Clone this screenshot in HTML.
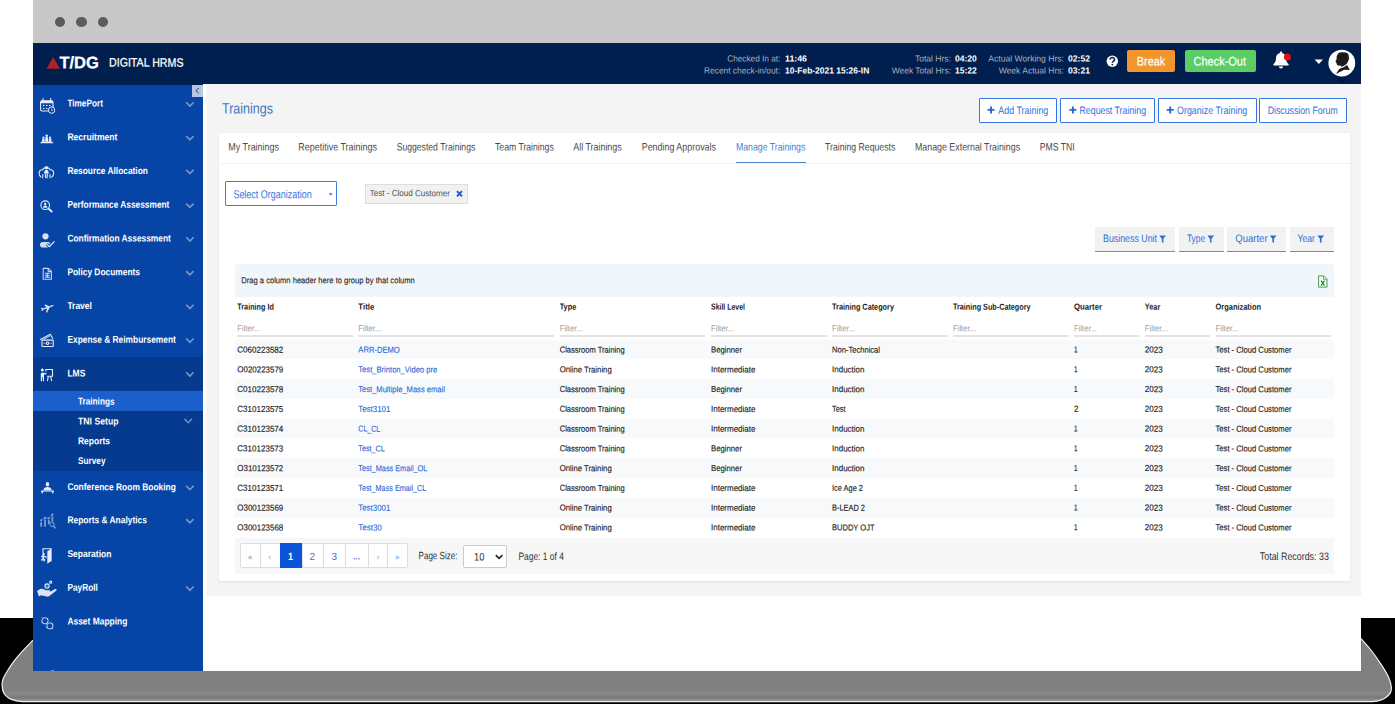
<!DOCTYPE html>
<html>
<head>
<meta charset="utf-8">
<title>Trainings</title>
<style>
html,body{margin:0;padding:0;}
body{width:1395px;height:704px;overflow:hidden;background:#fff;position:relative;font-family:"Liberation Sans",sans-serif;}
.a{position:absolute;}
.t{position:absolute;white-space:pre;transform-origin:0 50%;font-family:"Liberation Sans",sans-serif;}
svg{position:absolute;overflow:visible;}
</style>
</head>
<body>
<!-- device frame bottom -->
<div class="a" style="left:0;top:618px;width:34px;height:86px;background:#000"></div>
<div class="a" style="left:1361px;top:618px;width:34px;height:86px;background:#000"></div>
<svg style="left:0;top:600px" width="1395" height="104" viewBox="0 600 1395 104">
  <defs><linearGradient id="fg" x1="0" y1="671" x2="0" y2="702" gradientUnits="userSpaceOnUse"><stop offset="0" stop-color="#808080"/><stop offset=".613" stop-color="#808080"/><stop offset=".694" stop-color="#888888"/><stop offset=".774" stop-color="#828282"/><stop offset=".855" stop-color="#797979"/><stop offset=".919" stop-color="#8a8a8a"/><stop offset="1" stop-color="#9a9a9a"/></linearGradient></defs>
  <rect x="20" y="701" width="1355" height="3" fill="#000"/>
  <path d="M33 640.2C31.3 642.0 25.8 647.5 22.7 650.9C19.6 654.3 16.6 657.7 14.2 660.8C11.8 663.9 10.0 666.9 8.5 669.3C7.0 671.7 6.0 673.1 5.0 675.0C4.0 676.9 3.1 678.6 2.6 680.5C2.1 682.4 2.0 684.3 2.2 686.4C2.4 688.5 2.8 691.3 3.9 693.2C5.0 695.1 6.7 696.8 8.6 698.0C10.5 699.2 13.2 700.0 15.5 700.6C17.8 701.2 21.2 701.4 22.4 701.6L1371.9 701.6C1373.1 701.5 1376.9 701.3 1379.1 700.7C1381.3 700.1 1383.3 699.3 1385.2 698.0C1387.1 696.7 1389.3 694.8 1390.3 692.9C1391.3 691.0 1391.6 689.5 1391.3 686.8C1391.0 684.1 1390.0 680.4 1388.3 676.6C1386.6 672.9 1384.0 668.7 1381.1 664.3C1378.2 659.9 1374.2 654.3 1370.9 650.0C1367.6 645.7 1362.7 640.6 1361.1 638.7L1361 671L33 671Z" fill="url(#fg)"/>
  <path d="M33 640.2C31.3 642.0 25.8 647.5 22.7 650.9C19.6 654.3 16.6 657.7 14.2 660.8C11.8 663.9 10.0 666.9 8.5 669.3C7.0 671.7 6.0 673.1 5.0 675.0C4.0 676.9 3.1 678.6 2.6 680.5C2.1 682.4 2.0 684.3 2.2 686.4C2.4 688.5 2.8 691.3 3.9 693.2C5.0 695.1 6.7 696.8 8.6 698.0C10.5 699.2 13.2 700.0 15.5 700.6C17.8 701.2 21.2 701.4 22.4 701.6L1371.9 701.6C1373.1 701.5 1376.9 701.3 1379.1 700.7C1381.3 700.1 1383.3 699.3 1385.2 698.0C1387.1 696.7 1389.3 694.8 1390.3 692.9C1391.3 691.0 1391.6 689.5 1391.3 686.8C1391.0 684.1 1390.0 680.4 1388.3 676.6C1386.6 672.9 1384.0 668.7 1381.1 664.3C1378.2 659.9 1374.2 654.3 1370.9 650.0C1367.6 645.7 1362.7 640.6 1361.1 638.7" fill="none" stroke="#f0f0f0" stroke-width="1.200"/>
</svg>
<!-- browser chrome -->
<div class="a" style="left:33px;top:0;width:1328px;height:43px;background:#c8c8c8"></div>
<div class="a" style="left:54.5px;top:16.500px;width:10.800px;height:10.800px;border-radius:50%;background:#5c5c5c"></div>
<div class="a" style="left:76px;top:16.500px;width:10.800px;height:10.800px;border-radius:50%;background:#5c5c5c"></div>
<div class="a" style="left:97.7px;top:16.500px;width:10.800px;height:10.800px;border-radius:50%;background:#5c5c5c"></div>
<!-- app header -->
<div class="a" style="left:33px;top:43px;width:1328px;height:41.200px;background:#001f4e"></div>
<div class="a" style="left:33px;top:83px;width:170px;height:1.8px;background:#001f4e"></div>
<!-- content bg -->
<div class="a" style="left:203px;top:84.200px;width:1158px;height:511.800px;background:#f4f4f4"></div>
<div class="a" style="left:203px;top:84.200px;width:4px;height:587px;background:linear-gradient(90deg,#fff 0,#fff 55%,#f4f4f4 100%)"></div>
<div class="a" style="left:203px;top:596px;width:1158px;height:75px;background:#fff"></div>
<!-- sidebar -->
<div class="a" style="left:33px;top:84.800px;width:170px;height:586.200px;background:#0645a5"></div>
<!-- sidebar states -->
<div class="a" style="left:33px;top:357px;width:170px;height:114px;background:#053a8e"></div>
<div class="a" style="left:33px;top:391px;width:170px;height:20px;background:#1a5fcb"></div>
<div class="a" style="left:192px;top:85px;width:11px;height:12px;background:#b4c7e6"></div>
<!-- header buttons -->
<div class="a" style="left:1127.200px;top:50.300px;width:47.500px;height:22.100px;background:#f2962c;border-radius:2px"></div>
<div class="a" style="left:1184.500px;top:50.300px;width:71.500px;height:22.100px;background:#5bcd64;border-radius:2px"></div>
<!-- action buttons -->
<div class="a" style="left:978.5px;top:98px;width:76.5px;height:23px;border:1px solid #3576e2;background:#fff;border-radius:1px"></div>
<div class="a" style="left:1060px;top:98px;width:92.5px;height:23px;border:1px solid #3576e2;background:#fff;border-radius:1px"></div>
<div class="a" style="left:1157.5px;top:98px;width:97.3px;height:23px;border:1px solid #3576e2;background:#fff;border-radius:1px"></div>
<div class="a" style="left:1258.5px;top:98px;width:86.5px;height:23px;border:1px solid #3576e2;background:#fff;border-radius:1px"></div>
<!-- card -->
<div class="a" style="left:219px;top:133px;width:1131px;height:448px;background:#fff;box-shadow:0 1px 2px rgba(0,0,0,.08)"></div>
<div class="a" style="left:219px;top:162.600px;width:1131px;height:1px;background:#f2f2f2"></div>
<div class="a" style="left:736px;top:161.8px;width:69.8px;height:1.1px;background:#4f88d2"></div>
<!-- org select + chip -->
<div class="a" style="left:225px;top:181.200px;width:110px;height:23px;border:1px solid #3b7ee6;border-radius:1px;background:#fff"></div>
<div class="a" style="left:364.800px;top:183.800px;width:101.600px;height:17.800px;border:0.7px solid #ddd;background:#f1f1f1"></div>
<!-- filter buttons -->
<div class="a" style="left:1095px;top:227px;width:80.3px;height:23.600px;background:#f2f2f3;border-bottom:1.500px solid #5b91e2"></div>
<div class="a" style="left:1179px;top:227px;width:45px;height:23.600px;background:#f2f2f3;border-bottom:1.500px solid #5b91e2"></div>
<div class="a" style="left:1227.4px;top:227px;width:58.8px;height:23.600px;background:#f2f2f3;border-bottom:1.500px solid #5b91e2"></div>
<div class="a" style="left:1289.7px;top:227px;width:44.3px;height:23.600px;background:#f2f2f3;border-bottom:1.500px solid #5b91e2"></div>
<!-- grid -->
<div class="a" style="left:235px;top:264px;width:1099px;height:33.300px;background:#f1f6fa;border-radius:3px 3px 0 0"></div>
<div class="a" style="left:235px;top:339.5px;width:1099px;height:19.8px;background:#f7f9fa"></div>
<div class="a" style="left:235px;top:379.1px;width:1099px;height:19.8px;background:#f7f9fa"></div>
<div class="a" style="left:235px;top:418.7px;width:1099px;height:19.8px;background:#f7f9fa"></div>
<div class="a" style="left:235px;top:458.3px;width:1099px;height:19.8px;background:#f7f9fa"></div>
<div class="a" style="left:235px;top:497.9px;width:1099px;height:19.8px;background:#f7f9fa"></div>
<div class="a" style="left:237.3px;top:335.200px;width:115.5px;height:1.600px;background:#e3e3e3"></div>
<div class="a" style="left:358.3px;top:335.200px;width:195.9px;height:1.600px;background:#e3e3e3"></div>
<div class="a" style="left:559.7px;top:335.200px;width:145.8px;height:1.600px;background:#e3e3e3"></div>
<div class="a" style="left:711.0px;top:335.200px;width:115.5px;height:1.600px;background:#e3e3e3"></div>
<div class="a" style="left:832.0px;top:335.200px;width:115.5px;height:1.600px;background:#e3e3e3"></div>
<div class="a" style="left:953.0px;top:335.200px;width:115.5px;height:1.600px;background:#e3e3e3"></div>
<div class="a" style="left:1074.0px;top:335.200px;width:65.3px;height:1.600px;background:#e3e3e3"></div>
<div class="a" style="left:1144.8px;top:335.200px;width:65.2px;height:1.600px;background:#e3e3e3"></div>
<div class="a" style="left:1215.5px;top:335.200px;width:115.700px;height:1.600px;background:#e3e3e3"></div>

<div class="a" style="left:235px;top:537.5px;width:1099px;height:36px;background:#f7f7f7"></div>
<!-- pager -->
<div class="a" style="left:240px;top:543.4px;width:167.5px;height:25px;background:#fff;border:0.7px solid #ddd;border-radius:2px;box-sizing:border-box"></div>
<div class="a" style="left:260px;top:543.4px;width:0.7px;height:25px;background:#ddd"></div>
<div class="a" style="left:279.5px;top:543.4px;width:0.7px;height:25px;background:#ddd"></div>
<div class="a" style="left:301.7px;top:543.4px;width:0.7px;height:25px;background:#ddd"></div>
<div class="a" style="left:323px;top:543.4px;width:0.7px;height:25px;background:#ddd"></div>
<div class="a" style="left:345px;top:543.4px;width:0.7px;height:25px;background:#ddd"></div>
<div class="a" style="left:368px;top:543.4px;width:0.7px;height:25px;background:#ddd"></div>
<div class="a" style="left:386.5px;top:543.4px;width:0.7px;height:25px;background:#ddd"></div>
<div class="a" style="left:279.5px;top:543.4px;width:22.2px;height:25px;background:#0b55d9"></div>
<div class="a" style="left:463px;top:545.3px;width:44.3px;height:23px;background:#fff;border:0.7px solid #ccc;border-radius:2px;box-sizing:border-box"></div>

<svg style="left:0;top:0" width="1395" height="704" viewBox="0 0 1395 704">
<path d="M46.500 68.700 L53.200 56.900 L59.900 68.700 Z" fill="#ad2328"/>
<path d="M198.7 88 L196 90.7 L198.7 93.4" fill="none" stroke="#2a3350" stroke-width="1"/>
<path d="M186.2 102.2 L189.9 106.0 L193.6 102.2" fill="none" stroke="#7f97c2" stroke-width="1.6"/>
<path d="M186.2 136.0 L189.9 139.8 L193.6 136.0" fill="none" stroke="#7f97c2" stroke-width="1.6"/>
<path d="M186.2 169.8 L189.9 173.6 L193.6 169.8" fill="none" stroke="#7f97c2" stroke-width="1.6"/>
<path d="M186.2 203.6 L189.9 207.4 L193.6 203.6" fill="none" stroke="#7f97c2" stroke-width="1.6"/>
<path d="M186.2 237.3 L189.9 241.1 L193.6 237.3" fill="none" stroke="#7f97c2" stroke-width="1.6"/>
<path d="M186.2 271.1 L189.9 274.9 L193.6 271.1" fill="none" stroke="#7f97c2" stroke-width="1.6"/>
<path d="M186.2 304.8 L189.9 308.6 L193.6 304.8" fill="none" stroke="#7f97c2" stroke-width="1.6"/>
<path d="M186.2 338.5 L189.9 342.3 L193.6 338.5" fill="none" stroke="#7f97c2" stroke-width="1.6"/>
<path d="M186.2 372.3 L189.9 376.1 L193.6 372.3" fill="none" stroke="#7f97c2" stroke-width="1.6"/>
<path d="M186.2 485.9 L189.9 489.7 L193.6 485.9" fill="none" stroke="#7f97c2" stroke-width="1.6"/>
<path d="M186.2 519.1 L189.9 522.9 L193.6 519.1" fill="none" stroke="#7f97c2" stroke-width="1.6"/>
<path d="M186.2 586.5 L189.9 590.3 L193.6 586.5" fill="none" stroke="#7f97c2" stroke-width="1.6"/>
<path d="M184.500 418.9 L188.200 422.7 L191.900 418.9" fill="none" stroke="#6f8bbd" stroke-width="1.6"/>
<g><rect x="40.600" y="100.900" width="12.400" height="10.100" rx="1.400" fill="none" stroke="#e6edf8" stroke-width="1.1"/><path d="M40.600 103.300v-1.200a1.400 1.400 0 0 1 1.400-1.400h9.600a1.400 1.400 0 0 1 1.400 1.400v1.200z" fill="#e6edf8"/><path d="M43 98.600v2.800M50.600 98.600v2.800" fill="none" stroke="#e6edf8" stroke-width="1.1" stroke-width="1.300" stroke-linecap="round"/><g fill="#e6edf8"><circle cx="43.700" cy="105.500" r=".8"/><circle cx="46.700" cy="105.500" r=".8"/><circle cx="49.700" cy="105.500" r=".8"/><circle cx="43.700" cy="108.500" r=".8"/><circle cx="46.700" cy="108.500" r=".8"/></g><circle cx="51.600" cy="110.100" r="3.200" fill="#0645a5" stroke="#e6edf8" stroke-width="1"/><path d="M51.600 108.500v1.800h1.300" fill="none" stroke="#e6edf8" stroke-width=".8"/></g>
<g fill="#e6edf8"><circle cx="46.700" cy="135.700" r="1.300"/><path d="M45.300 141.800v-3.600a1.400 1.200 0 0 1 2.800 0v3.600z"/><circle cx="43.400" cy="137.700" r="1.100"/><path d="M42.100 141.800v-2.200a1.300 1.100 0 0 1 2.600 0v2.200z"/><circle cx="50.100" cy="137.700" r="1.100"/><path d="M48.800 141.800v-2.200a1.300 1.100 0 0 1 2.600 0v2.200z"/><path d="M40 143.200l1.600-1.700h10.400l1.600 1.700z"/></g>
<g><circle cx="46.400" cy="167.700" r="1.600" fill="#e6edf8"/><path d="M43.900 173.600l.5-2.200a2 1.600 0 0 1 4 0l.5 2.200z" fill="#e6edf8"/><path d="M45.400 173.600l.3 4.600M47.400 173.600l-.3 4.600" fill="none" stroke="#e6edf8" stroke-width="1.1" stroke-width="1"/><path d="M42.300 170.400a4.400 4.400 0 0 1 8.200 0" fill="none" stroke="#e6edf8" stroke-width="1.1" stroke-width="1"/><path d="M41.700 169.600C38.300 171 38.200 175 41.400 177.400" fill="none" stroke="#e6edf8" stroke-width="1.1" stroke-width="1.300"/><path d="M51.100 169.600C54.500 171 54.600 175 51.400 177.400" fill="none" stroke="#e6edf8" stroke-width="1.1" stroke-width="1.300"/><path d="M42.600 174.200C43.300 175.600 43.200 177 42.400 178.200M50.200 174.200C49.500 175.600 49.600 177 50.400 178.200" fill="none" stroke="#e6edf8" stroke-width="1.1" stroke-width=".9"/></g>
<g><circle cx="45.200" cy="205.200" r="4.300" fill="none" stroke="#e6edf8" stroke-width="1.1"/><circle cx="45.200" cy="204" r="1.200" fill="#e6edf8"/><path d="M43 207.700a2.200 2.100 0 0 1 4.400 0z" fill="#e6edf8"/><path d="M48.900 208.900l2.700 2.600" fill="none" stroke="#e6edf8" stroke-width="2" stroke-linecap="round"/></g>
<g><circle cx="45.500" cy="236.300" r="3.100" fill="#d3dff3"/><rect x="40" y="241.900" width="10.600" height="5.700" rx="2.800" fill="#d3dff3"/><path d="M46.800 244.200l2.500 2.400 5.200-5.200" fill="none" stroke="#0645a5" stroke-width="3"/><path d="M46.800 244.200l2.500 2.400 5.200-5.200" fill="none" stroke="#e6edf8" stroke-width="1.300"/></g>
<g opacity=".85"><path d="M43.2 268.4h5.2l3 3v7.9h-8.2z" fill="none" stroke="#e6edf8" stroke-width="1.1" stroke-linejoin="round"/><path d="M48.2 268.600v3h3" fill="none" stroke="#e6edf8" stroke-width="1.1" stroke-width=".8"/><path d="M44.900 273.300h4.800M44.900 275.200h4.800M44.900 277.100h4.800M47.300 273.300v3.800" fill="none" stroke="#e6edf8" stroke-width="1.1" stroke-width=".7"/></g>
<g fill="#e6edf8" opacity=".92"><path d="M53.200 304.900C53.900 305.200 53.600 306 52.800 306.300L49.700 307.600L47.200 312.400L46 312.500L46.900 308.600L43.600 309.600L42.400 311L41.500 311.100L41.900 309.300L40.700 308.100L41.600 307.800L43.100 308.300L46.400 307.200L44.200 304.900L45.500 304.600L49.200 306.200L52.200 305Z"/></g>
<g><path d="M40 339.800L50.300 334.300L52.800 338.700" fill="none" stroke="#e6edf8" stroke-width="1.1" stroke-linejoin="round"/><path d="M43.800 339.200L49.900 335.900" fill="none" stroke="#e6edf8" stroke-width="1.1" stroke-width=".7" opacity=".7"/><rect x="42" y="340.100" width="11.200" height="6.400" rx=".6" fill="none" stroke="#e6edf8" stroke-width="1.1" stroke-width="1.400"/><circle cx="47.600" cy="343.300" r="1.800" fill="#e6edf8"/><circle cx="47.600" cy="343.300" r=".7" fill="#0645a5"/><path d="M43.700 343.300h1M50.600 343.300h1" fill="none" stroke="#e6edf8" stroke-width="1.1" stroke-width=".9"/></g>
<g><circle cx="42.300" cy="370" r="1.500" fill="#e6edf8"/><path d="M40.800 381.200v-7.200a1.200 1.200 0 0 1 1.200-1.200h2l2.400 .300v1.100l-2.400 .200v6.800h-1.100v-4h-.8v4z" fill="#e6edf8"/><path d="M45.900 371.400v-1.900h6.600v6.700h-5.400" fill="none" stroke="#e6edf8" stroke-width="1.1" stroke-width="1.300"/><path d="M48.300 376.400l-.9 4.800M50.600 376.400l1.100 4.800" fill="none" stroke="#e6edf8" stroke-width="1.1"/></g>
<g><ellipse cx="47.500" cy="484.200" rx="1.700" ry="2.300" fill="#e6edf8"/><path d="M43.400 490.200C43.400 487.700 45.400 487 47.500 487C49.600 487 51.600 487.700 51.600 490.200Z" fill="#e6edf8"/><path d="M41.200 491h12.600" fill="none" stroke="#e6edf8" stroke-width="1.1" stroke-width="1.300"/><path d="M40.900 491.300h2.600l-1.300 2.700zM51.500 491.300h2.600l-1.300 2.700z" fill="#e6edf8"/></g>
<g fill="none" stroke="#86a6dc"><path d="M41.200 526.800v-4.600M45 526.800v-7.200M48.700 524v-4M52.400 521.600v-5" stroke-width="1.600"/><path d="M41.200 520.300L45 517.800L48.700 518.400L52.400 514.700" stroke-width=".6"/><g fill="#86a6dc" stroke="none"><circle cx="41.200" cy="520.300" r="1.100"/><circle cx="45" cy="517.800" r="1.100"/><circle cx="48.700" cy="518.400" r="1.100"/><circle cx="52.400" cy="514.700" r="1.100"/></g><circle cx="51.900" cy="524.200" r="2.200" stroke-width="1" fill="#0645a5"/><path d="M53.500 526l2.100 2.400" stroke-width="1.300"/></g>
<g><path d="M43 561.200v-12.500h8.100v12.500" fill="none" stroke="#e6edf8" stroke-width="1.1" stroke-width=".9"/><path d="M47.300 551.300L51 548.900L51 561.300L47.300 563.700Z" fill="#e6edf8"/><circle cx="43.900" cy="554" r="1" fill="#e6edf8"/><path d="M41.200 556.700l2.300-1 1.700 1.200 1.500.2M43.700 555.800l-.6 2.600 1.600 1.400-.2 1.500M43.100 558.300l-1.900 2.100" fill="none" stroke="#e6edf8" stroke-width="1.1" stroke-width=".95"/></g>
<g><path d="M37 591l2.800-1.800c1.400-.7 2.800-.6 4 0l2.200 1h3.600c1 0 1 1.500 0 1.600h-3.200 3.800l4.800-2.700c1.200-.6 2.200.7 1.200 1.600l-6.800 5.400c-.9.6-1.800.7-2.800.5l-5.600-1.300-2 1.300z" fill="#e6edf8" opacity=".95"/><circle cx="47.100" cy="586" r="2.100" fill="none" stroke="#e6edf8" stroke-width="1.1" stroke-width="1.200"/><circle cx="47.100" cy="586" r=".6" fill="#e6edf8"/><circle cx="50.700" cy="582.200" r="1.100" fill="none" stroke="#e6edf8" stroke-width="1.1" stroke-width=".9"/></g>
<g fill="none" stroke="#c9d7f0" stroke-width="1"><circle cx="45" cy="620.800" r="3.100"/><circle cx="49.900" cy="625.900" r="3.100"/><path d="M42.800 618.400l-1-1M52.200 628.200l1 1" stroke-width=".9"/></g>
<g fill="#c9d7f0"><circle cx="42.300" cy="622.500" r=".8"/><circle cx="47.600" cy="619" r=".8"/><circle cx="47.200" cy="627.500" r=".8"/><circle cx="52.600" cy="624.200" r=".8"/></g>
<ellipse cx="52.700" cy="670.500" rx="1.300" ry=".600" fill="#9db6e3"/>
<circle cx="1112.3" cy="61.3" r="5.7" fill="#fff"/>
<path d="M1110.1 59.6a2.2 2 0 1 1 3.2 1.7c-.7.4-1 .7-1 1.5" fill="none" stroke="#001f4e" stroke-width="1.5"/><circle cx="1112.3" cy="64.6" r=".9" fill="#001f4e"/>
<path d="M1281 51.4c.6 0 1.100.4 1.100 1v.5c2.400.6 3.900 2.600 3.900 5.100 0 3.400 1.100 4.900 2.400 6 .6.600.2 1.600-.7 1.600h-13.400c-.9 0-1.300-1-.7-1.600 1.300-1.100 2.400-2.600 2.400-6 0-2.500 1.500-4.500 3.900-5.100v-.5c0-.6.5-1 1.100-1zM1278.900 66.500h4.200a2.100 2.100 0 0 1-4.200 0z" fill="#fff"/>
<circle cx="1287.400" cy="56.900" r="3.500" fill="#f20d0d"/>
<path d="M1314.600 59.600h8.400l-4.200 4.300z" fill="#fff"/>
<ellipse cx="1342" cy="79.8" rx="4.2" ry="2.2" fill="#001440"/>
<circle cx="1341.8" cy="63.1" r="13.4" fill="#fff"/>
<path d="M1342.1 52.2L1346 52.6C1347.4 53.2 1348.3 54 1348.6 55.2L1349 58.3C1348.9 59.8 1348.4 60.9 1347.8 61.9L1346.6 64.1L1343.6 65.9L1341.4 66.7L1340.3 65.6L1337.6 65.6C1337.1 65 1336.8 64.4 1336.7 63.7L1336.2 62.4L1335.4 61.3L1336.6 59.5L1336.6 57.3C1336.6 56.2 1336.9 55.300 1337.500 54.400C1338 53.500 1338.700 52.900 1339.600 52.600Z" fill="#1b1b1b"/>
<path d="M1335.900 74L1339.400 68.700L1343.600 67.300L1347.100 65.100L1349.800 70.100L1344.200 69.800Z" fill="#1b1b1b"/>
<path d="M987.5 109.900h7M991.0 106.400v7" fill="none" stroke="#2a66cf" stroke-width="1.900"/>
<path d="M1069.4 109.900h7M1072.9 106.400v7" fill="none" stroke="#2a66cf" stroke-width="1.900"/>
<path d="M1166.7 109.900h7M1170.2 106.400v7" fill="none" stroke="#2a66cf" stroke-width="1.900"/>
<path d="M457 191.100l5 5.300M462 191.100l-5 5.300" fill="none" stroke="#1d55d3" stroke-width="1.900"/>
<path d="M328.800 193.200h3.800l-1.900 2.200z" fill="#2b6fdc"/>
<path d="M495.800 555.100l3.300 3.200 3.300-3.200" fill="none" stroke="#222" stroke-width="1.600"/>
<path d="M1159.2 235.500h6.800l-2.600 3.200v4.400l-1.600-1.200v-3.200z" fill="#2b6fdc"/>
<path d="M1207.3 235.500h6.800l-2.600 3.200v4.400l-1.600-1.200v-3.200z" fill="#2b6fdc"/>
<path d="M1269.7 235.500h6.800l-2.600 3.200v4.400l-1.600-1.200v-3.200z" fill="#2b6fdc"/>
<path d="M1317.3 235.500h6.800l-2.600 3.200v4.400l-1.600-1.200v-3.200z" fill="#2b6fdc"/>
<path d="M1318.600 275.900h5l3.400 3.400v7.800h-8.400z" fill="#fff" stroke="#3da14f" stroke-width="1" stroke-linejoin="round"/><path d="M1323.500 276v3.300h3.300" fill="none" stroke="#3da14f" stroke-width=".8"/>
<path d="M1321 280.600l3.500 5.200M1324.500 280.600l-3.500 5.200" fill="none" stroke="#1f6a30" stroke-width="1.100"/>
</svg>
<span class="t" style="left:59px;top:49px;font-size:16.8px;line-height:28px;color:#fff;font-weight:700;-webkit-text-stroke:0.25px #fff;transform:translate(0.40px,0.20px) scaleX(0.983) rotate(.03deg);">T/DG</span>
<span class="t" style="left:109px;top:52px;font-size:12.2px;line-height:20px;color:#fff;-webkit-text-stroke:0.25px #fff;transform:translate(0.00px,0.60px) scaleX(0.873) rotate(.03deg);">DIGITAL HRMS</span>
<span class="t" style="left:727px;top:51px;font-size:8.8px;line-height:14px;color:#a8b0c0;transform:translate(0.30px,0.41px) scaleX(0.934) rotate(.03deg);">Checked In at:</span>
<span class="t" style="left:785px;top:51px;font-size:8.8px;line-height:14px;color:#fff;font-weight:700;transform:translate(0.00px,0.41px) scaleX(0.999) rotate(.03deg);">11:46</span>
<span class="t" style="left:704px;top:63px;font-size:8.8px;line-height:14px;color:#a8b0c0;transform:translate(0.00px,0.41px) scaleX(0.951) rotate(.03deg);">Recent check-in/out:</span>
<span class="t" style="left:785px;top:63px;font-size:8.8px;line-height:14px;color:#fff;font-weight:700;transform:translate(0.00px,0.41px) scaleX(0.963) rotate(.03deg);">10-Feb-2021 15:26-IN</span>
<span class="t" style="left:915px;top:51px;font-size:8.8px;line-height:14px;color:#a8b0c0;transform:translate(0.00px,0.41px) scaleX(0.969) rotate(.03deg);">Total Hrs:</span>
<span class="t" style="left:955px;top:51px;font-size:8.8px;line-height:14px;color:#fff;font-weight:700;transform:translate(0.00px,0.41px) scaleX(0.964) rotate(.03deg);">04:20</span>
<span class="t" style="left:891px;top:63px;font-size:8.8px;line-height:14px;color:#a8b0c0;transform:translate(0.70px,0.41px) scaleX(0.960) rotate(.03deg);">Week Total Hrs:</span>
<span class="t" style="left:955px;top:63px;font-size:8.8px;line-height:14px;color:#fff;font-weight:700;transform:translate(0.00px,0.41px) scaleX(0.964) rotate(.03deg);">15:22</span>
<span class="t" style="left:988px;top:51px;font-size:8.8px;line-height:14px;color:#a8b0c0;transform:translate(0.30px,0.41px) scaleX(0.976) rotate(.03deg);">Actual Working Hrs:</span>
<span class="t" style="left:1068px;top:51px;font-size:8.8px;line-height:14px;color:#fff;font-weight:700;transform:translate(0.00px,0.41px) scaleX(0.978) rotate(.03deg);">02:52</span>
<span class="t" style="left:998px;top:63px;font-size:8.8px;line-height:14px;color:#a8b0c0;transform:translate(0.70px,0.41px) scaleX(0.970) rotate(.03deg);">Week Actual Hrs:</span>
<span class="t" style="left:1068px;top:63px;font-size:8.8px;line-height:14px;color:#fff;font-weight:700;transform:translate(0.00px,0.41px) scaleX(0.978) rotate(.03deg);">03:21</span>
<span class="t" style="left:1136px;top:51px;font-size:12.4px;line-height:20px;color:#fff;-webkit-text-stroke:0.2px #fff;transform:translate(0.80px,0.40px) scaleX(0.877) rotate(.03deg);">Break</span>
<span class="t" style="left:1193px;top:51px;font-size:12.4px;line-height:20px;color:#fff;-webkit-text-stroke:0.2px #fff;transform:translate(0.50px,0.40px) scaleX(0.887) rotate(.03deg);">Check-Out</span>
<span class="t" style="left:67px;top:95px;font-size:9.8px;line-height:16px;color:#fff;font-weight:700;transform:translate(0.40px,0.41px) scaleX(0.839) rotate(.03deg);">TimePort</span>
<span class="t" style="left:67px;top:129px;font-size:9.8px;line-height:16px;color:#fff;font-weight:700;transform:translate(0.40px,0.21px) scaleX(0.875) rotate(.03deg);">Recruitment</span>
<span class="t" style="left:67px;top:163px;font-size:9.8px;line-height:16px;color:#fff;font-weight:700;transform:translate(0.40px,0.01px) scaleX(0.853) rotate(.03deg);">Resource Allocation</span>
<span class="t" style="left:67px;top:196px;font-size:9.8px;line-height:16px;color:#fff;font-weight:700;transform:translate(0.40px,0.81px) scaleX(0.850) rotate(.03deg);">Performance Assessment</span>
<span class="t" style="left:67px;top:230px;font-size:9.8px;line-height:16px;color:#fff;font-weight:700;transform:translate(0.40px,0.51px) scaleX(0.855) rotate(.03deg);">Confirmation Assessment</span>
<span class="t" style="left:67px;top:264px;font-size:9.8px;line-height:16px;color:#fff;font-weight:700;transform:translate(0.40px,0.31px) scaleX(0.854) rotate(.03deg);">Policy Documents</span>
<span class="t" style="left:67px;top:298px;font-size:9.8px;line-height:16px;color:#fff;font-weight:700;transform:translate(0.40px,0.01px) scaleX(0.865) rotate(.03deg);">Travel</span>
<span class="t" style="left:67px;top:331px;font-size:9.8px;line-height:16px;color:#fff;font-weight:700;transform:translate(0.40px,0.71px) scaleX(0.855) rotate(.03deg);">Expense &amp; Reimbursement</span>
<span class="t" style="left:67px;top:365px;font-size:9.8px;line-height:16px;color:#fff;font-weight:700;transform:translate(0.40px,0.51px) scaleX(0.870) rotate(.03deg);">LMS</span>
<span class="t" style="left:67px;top:479px;font-size:9.8px;line-height:16px;color:#fff;font-weight:700;transform:translate(0.40px,0.11px) scaleX(0.859) rotate(.03deg);">Conference Room Booking</span>
<span class="t" style="left:67px;top:512px;font-size:9.8px;line-height:16px;color:#fff;font-weight:700;transform:translate(0.40px,0.31px) scaleX(0.857) rotate(.03deg);">Reports &amp; Analytics</span>
<span class="t" style="left:67px;top:546px;font-size:9.8px;line-height:16px;color:#fff;font-weight:700;transform:translate(0.40px,0.11px) scaleX(0.869) rotate(.03deg);">Separation</span>
<span class="t" style="left:67px;top:579px;font-size:9.8px;line-height:16px;color:#fff;font-weight:700;transform:translate(0.40px,0.71px) scaleX(0.849) rotate(.03deg);">PayRoll</span>
<span class="t" style="left:67px;top:613px;font-size:9.8px;line-height:16px;color:#fff;font-weight:700;transform:translate(0.40px,0.41px) scaleX(0.861) rotate(.03deg);">Asset Mapping</span>
<span class="t" style="left:78px;top:393px;font-size:9.8px;line-height:16px;color:#fff;font-weight:700;transform:translate(0.00px,0.61px) scaleX(0.838) rotate(.03deg);">Trainings</span>
<span class="t" style="left:78px;top:413px;font-size:9.8px;line-height:16px;color:#fff;font-weight:700;transform:translate(0.00px,0.51px) scaleX(0.886) rotate(.03deg);">TNI Setup</span>
<span class="t" style="left:78px;top:433px;font-size:9.8px;line-height:16px;color:#fff;font-weight:700;transform:translate(0.00px,0.31px) scaleX(0.864) rotate(.03deg);">Reports</span>
<span class="t" style="left:78px;top:453px;font-size:9.8px;line-height:16px;color:#fff;font-weight:700;transform:translate(0.00px,0.11px) scaleX(0.841) rotate(.03deg);">Survey</span>
<span class="t" style="left:222px;top:96px;font-size:15px;line-height:24px;color:#3f74c2;transform:translate(0.00px,0.44px) scaleX(0.834) rotate(.03deg);">Trainings</span>
<span class="t" style="left:998px;top:100px;font-size:10.8px;line-height:18px;color:#2b6fdc;transform:translate(0.30px,0.94px) scaleX(0.825) rotate(.03deg);">Add Training</span>
<span class="t" style="left:1079px;top:100px;font-size:10.8px;line-height:18px;color:#2b6fdc;transform:translate(0.50px,0.94px) scaleX(0.815) rotate(.03deg);">Request Training</span>
<span class="t" style="left:1177px;top:100px;font-size:10.8px;line-height:18px;color:#2b6fdc;transform:translate(0.00px,0.94px) scaleX(0.825) rotate(.03deg);">Organize Training</span>
<span class="t" style="left:1267px;top:100px;font-size:10.8px;line-height:18px;color:#2b6fdc;transform:translate(0.70px,0.94px) scaleX(0.810) rotate(.03deg);">Discussion Forum</span>
<span class="t" style="left:228px;top:137px;font-size:10.8px;line-height:18px;color:#4a4a4a;transform:translate(0.30px,0.54px) scaleX(0.828) rotate(.03deg);">My Trainings</span>
<span class="t" style="left:298px;top:137px;font-size:10.8px;line-height:18px;color:#4a4a4a;transform:translate(0.30px,0.54px) scaleX(0.830) rotate(.03deg);">Repetitive Trainings</span>
<span class="t" style="left:396px;top:137px;font-size:10.8px;line-height:18px;color:#4a4a4a;transform:translate(0.70px,0.54px) scaleX(0.798) rotate(.03deg);">Suggested Trainings</span>
<span class="t" style="left:495px;top:137px;font-size:10.8px;line-height:18px;color:#4a4a4a;transform:translate(0.00px,0.54px) scaleX(0.802) rotate(.03deg);">Team Trainings</span>
<span class="t" style="left:573px;top:137px;font-size:10.8px;line-height:18px;color:#4a4a4a;transform:translate(0.30px,0.54px) scaleX(0.823) rotate(.03deg);">All Trainings</span>
<span class="t" style="left:641px;top:137px;font-size:10.8px;line-height:18px;color:#4a4a4a;transform:translate(0.70px,0.54px) scaleX(0.825) rotate(.03deg);">Pending Approvals</span>
<span class="t" style="left:736px;top:137px;font-size:10.8px;line-height:18px;color:#4480d2;transform:translate(0.00px,0.54px) scaleX(0.807) rotate(.03deg);">Manage Trainings</span>
<span class="t" style="left:825px;top:137px;font-size:10.8px;line-height:18px;color:#4a4a4a;transform:translate(0.00px,0.54px) scaleX(0.806) rotate(.03deg);">Training Requests</span>
<span class="t" style="left:915px;top:137px;font-size:10.8px;line-height:18px;color:#4a4a4a;transform:translate(0.00px,0.54px) scaleX(0.818) rotate(.03deg);">Manage External Trainings</span>
<span class="t" style="left:1039px;top:137px;font-size:10.8px;line-height:18px;color:#4a4a4a;transform:translate(0.70px,0.54px) scaleX(0.803) rotate(.03deg);">PMS TNI</span>
<span class="t" style="left:233px;top:185px;font-size:11.5px;line-height:18px;color:#3474df;transform:translate(0.40px,0.20px) scaleX(0.780) rotate(.03deg);">Select Organization</span>
<span class="t" style="left:369px;top:186px;font-size:8.9px;line-height:14px;color:#555;transform:translate(0.70px,0.10px) scaleX(0.909) rotate(.03deg);">Test - Cloud Customer</span>
<span class="t" style="left:1103px;top:228px;font-size:10.8px;line-height:18px;color:#2b6fdc;transform:translate(0.00px,0.94px) scaleX(0.818) rotate(.03deg);">Business Unit</span>
<span class="t" style="left:1187px;top:228px;font-size:10.8px;line-height:18px;color:#2b6fdc;transform:translate(0.00px,0.94px) scaleX(0.769) rotate(.03deg);">Type</span>
<span class="t" style="left:1235px;top:228px;font-size:10.8px;line-height:18px;color:#2b6fdc;transform:translate(0.30px,0.94px) scaleX(0.882) rotate(.03deg);">Quarter</span>
<span class="t" style="left:1297px;top:228px;font-size:10.8px;line-height:18px;color:#2b6fdc;transform:translate(0.50px,0.94px) scaleX(0.802) rotate(.03deg);">Year</span>
<span class="t" style="left:241px;top:273px;font-size:8.7px;line-height:14px;color:#262626;-webkit-text-stroke:0.12px #262626;transform:translate(0.30px,0.22px) scaleX(0.872) rotate(.03deg);">Drag a column header here to group by that column</span>
<span class="t" style="left:237px;top:299px;font-size:8.7px;line-height:14px;color:#222;font-weight:700;transform:translate(0.30px,0.62px) scaleX(0.831) rotate(.03deg);">Training Id</span>
<span class="t" style="left:358px;top:299px;font-size:8.7px;line-height:14px;color:#222;font-weight:700;transform:translate(0.30px,0.62px) scaleX(0.904) rotate(.03deg);">Title</span>
<span class="t" style="left:559px;top:299px;font-size:8.7px;line-height:14px;color:#222;font-weight:700;transform:translate(0.70px,0.62px) scaleX(0.840) rotate(.03deg);">Type</span>
<span class="t" style="left:711px;top:299px;font-size:8.7px;line-height:14px;color:#222;font-weight:700;transform:translate(0.00px,0.62px) scaleX(0.800) rotate(.03deg);">Skill Level</span>
<span class="t" style="left:832px;top:299px;font-size:8.7px;line-height:14px;color:#222;font-weight:700;transform:translate(0.00px,0.62px) scaleX(0.839) rotate(.03deg);">Training Category</span>
<span class="t" style="left:953px;top:299px;font-size:8.7px;line-height:14px;color:#222;font-weight:700;transform:translate(0.00px,0.62px) scaleX(0.832) rotate(.03deg);">Training Sub-Category</span>
<span class="t" style="left:1074px;top:299px;font-size:8.7px;line-height:14px;color:#222;font-weight:700;transform:translate(0.00px,0.62px) scaleX(0.892) rotate(.03deg);">Quarter</span>
<span class="t" style="left:1144px;top:299px;font-size:8.7px;line-height:14px;color:#222;font-weight:700;transform:translate(0.80px,0.62px) scaleX(0.844) rotate(.03deg);">Year</span>
<span class="t" style="left:1215px;top:299px;font-size:8.7px;line-height:14px;color:#222;font-weight:700;transform:translate(0.50px,0.62px) scaleX(0.857) rotate(.03deg);">Organization</span>
<span class="t" style="left:237px;top:321px;font-size:8.7px;line-height:14px;color:#9c9c9c;transform:translate(0.30px,0.32px) scaleX(0.882) rotate(.03deg);">Filter...</span>
<span class="t" style="left:358px;top:321px;font-size:8.7px;line-height:14px;color:#9c9c9c;transform:translate(0.30px,0.32px) scaleX(0.882) rotate(.03deg);">Filter...</span>
<span class="t" style="left:559px;top:321px;font-size:8.7px;line-height:14px;color:#9c9c9c;transform:translate(0.70px,0.32px) scaleX(0.882) rotate(.03deg);">Filter...</span>
<span class="t" style="left:711px;top:321px;font-size:8.7px;line-height:14px;color:#9c9c9c;transform:translate(0.00px,0.32px) scaleX(0.882) rotate(.03deg);">Filter...</span>
<span class="t" style="left:832px;top:321px;font-size:8.7px;line-height:14px;color:#9c9c9c;transform:translate(0.00px,0.32px) scaleX(0.882) rotate(.03deg);">Filter...</span>
<span class="t" style="left:953px;top:321px;font-size:8.7px;line-height:14px;color:#9c9c9c;transform:translate(0.00px,0.32px) scaleX(0.882) rotate(.03deg);">Filter...</span>
<span class="t" style="left:1074px;top:321px;font-size:8.7px;line-height:14px;color:#9c9c9c;transform:translate(0.00px,0.32px) scaleX(0.882) rotate(.03deg);">Filter...</span>
<span class="t" style="left:1144px;top:321px;font-size:8.7px;line-height:14px;color:#9c9c9c;transform:translate(0.80px,0.32px) scaleX(0.882) rotate(.03deg);">Filter...</span>
<span class="t" style="left:1215px;top:321px;font-size:8.7px;line-height:14px;color:#9c9c9c;transform:translate(0.50px,0.32px) scaleX(0.882) rotate(.03deg);">Filter...</span>
<span class="t" style="left:237px;top:342px;font-size:8.7px;line-height:14px;color:#242424;-webkit-text-stroke:0.15px #242424;transform:translate(0.30px,0.62px) scaleX(0.924) rotate(.03deg);">C060223582</span>
<span class="t" style="left:358px;top:342px;font-size:8.7px;line-height:14px;color:#2567d8;-webkit-text-stroke:0.1px #2567d8;transform:translate(0.30px,0.62px) scaleX(0.877) rotate(.03deg);">ARR-DEMO</span>
<span class="t" style="left:559px;top:342px;font-size:8.7px;line-height:14px;color:#242424;-webkit-text-stroke:0.15px #242424;transform:translate(0.70px,0.62px) scaleX(0.868) rotate(.03deg);">Classroom Training</span>
<span class="t" style="left:711px;top:342px;font-size:8.7px;line-height:14px;color:#242424;-webkit-text-stroke:0.15px #242424;transform:translate(0.00px,0.62px) scaleX(0.891) rotate(.03deg);">Beginner</span>
<span class="t" style="left:832px;top:342px;font-size:8.7px;line-height:14px;color:#242424;-webkit-text-stroke:0.15px #242424;transform:translate(0.00px,0.62px) scaleX(0.872) rotate(.03deg);">Non-Technical</span>
<span class="t" style="left:1074px;top:342px;font-size:8.7px;line-height:14px;color:#242424;-webkit-text-stroke:0.15px #242424;transform:translate(0.00px,0.62px) scaleX(0.723) rotate(.03deg);">1</span>
<span class="t" style="left:1144px;top:342px;font-size:8.7px;line-height:14px;color:#242424;-webkit-text-stroke:0.15px #242424;transform:translate(0.80px,0.62px) scaleX(0.931) rotate(.03deg);">2023</span>
<span class="t" style="left:1215px;top:342px;font-size:8.7px;line-height:14px;color:#242424;-webkit-text-stroke:0.15px #242424;transform:translate(0.50px,0.62px) scaleX(0.879) rotate(.03deg);">Test - Cloud Customer</span>
<span class="t" style="left:237px;top:362px;font-size:8.7px;line-height:14px;color:#242424;-webkit-text-stroke:0.15px #242424;transform:translate(0.30px,0.37px) scaleX(0.915) rotate(.03deg);">O020223579</span>
<span class="t" style="left:358px;top:362px;font-size:8.7px;line-height:14px;color:#2567d8;-webkit-text-stroke:0.1px #2567d8;transform:translate(0.30px,0.37px) scaleX(0.876) rotate(.03deg);">Test_Brinton_Video pre</span>
<span class="t" style="left:559px;top:362px;font-size:8.7px;line-height:14px;color:#242424;-webkit-text-stroke:0.15px #242424;transform:translate(0.70px,0.37px) scaleX(0.890) rotate(.03deg);">Online Training</span>
<span class="t" style="left:711px;top:362px;font-size:8.7px;line-height:14px;color:#242424;-webkit-text-stroke:0.15px #242424;transform:translate(0.00px,0.37px) scaleX(0.921) rotate(.03deg);">Intermediate</span>
<span class="t" style="left:832px;top:362px;font-size:8.7px;line-height:14px;color:#242424;-webkit-text-stroke:0.15px #242424;transform:translate(0.00px,0.37px) scaleX(0.922) rotate(.03deg);">Induction</span>
<span class="t" style="left:1074px;top:362px;font-size:8.7px;line-height:14px;color:#242424;-webkit-text-stroke:0.15px #242424;transform:translate(0.00px,0.37px) scaleX(0.723) rotate(.03deg);">1</span>
<span class="t" style="left:1144px;top:362px;font-size:8.7px;line-height:14px;color:#242424;-webkit-text-stroke:0.15px #242424;transform:translate(0.80px,0.37px) scaleX(0.931) rotate(.03deg);">2023</span>
<span class="t" style="left:1215px;top:362px;font-size:8.7px;line-height:14px;color:#242424;-webkit-text-stroke:0.15px #242424;transform:translate(0.50px,0.37px) scaleX(0.879) rotate(.03deg);">Test - Cloud Customer</span>
<span class="t" style="left:237px;top:382px;font-size:8.7px;line-height:14px;color:#242424;-webkit-text-stroke:0.15px #242424;transform:translate(0.30px,0.12px) scaleX(0.924) rotate(.03deg);">C010223578</span>
<span class="t" style="left:358px;top:382px;font-size:8.7px;line-height:14px;color:#2567d8;-webkit-text-stroke:0.1px #2567d8;transform:translate(0.30px,0.12px) scaleX(0.870) rotate(.03deg);">Test_Multiple_Mass email</span>
<span class="t" style="left:559px;top:382px;font-size:8.7px;line-height:14px;color:#242424;-webkit-text-stroke:0.15px #242424;transform:translate(0.70px,0.12px) scaleX(0.868) rotate(.03deg);">Classroom Training</span>
<span class="t" style="left:711px;top:382px;font-size:8.7px;line-height:14px;color:#242424;-webkit-text-stroke:0.15px #242424;transform:translate(0.00px,0.12px) scaleX(0.891) rotate(.03deg);">Beginner</span>
<span class="t" style="left:832px;top:382px;font-size:8.7px;line-height:14px;color:#242424;-webkit-text-stroke:0.15px #242424;transform:translate(0.00px,0.12px) scaleX(0.922) rotate(.03deg);">Induction</span>
<span class="t" style="left:1074px;top:382px;font-size:8.7px;line-height:14px;color:#242424;-webkit-text-stroke:0.15px #242424;transform:translate(0.00px,0.12px) scaleX(0.723) rotate(.03deg);">1</span>
<span class="t" style="left:1144px;top:382px;font-size:8.7px;line-height:14px;color:#242424;-webkit-text-stroke:0.15px #242424;transform:translate(0.80px,0.12px) scaleX(0.931) rotate(.03deg);">2023</span>
<span class="t" style="left:1215px;top:382px;font-size:8.7px;line-height:14px;color:#242424;-webkit-text-stroke:0.15px #242424;transform:translate(0.50px,0.12px) scaleX(0.879) rotate(.03deg);">Test - Cloud Customer</span>
<span class="t" style="left:237px;top:401px;font-size:8.7px;line-height:14px;color:#242424;-webkit-text-stroke:0.15px #242424;transform:translate(0.30px,0.87px) scaleX(0.924) rotate(.03deg);">C310123575</span>
<span class="t" style="left:358px;top:401px;font-size:8.7px;line-height:14px;color:#2567d8;-webkit-text-stroke:0.1px #2567d8;transform:translate(0.30px,0.87px) scaleX(0.907) rotate(.03deg);">Test3101</span>
<span class="t" style="left:559px;top:401px;font-size:8.7px;line-height:14px;color:#242424;-webkit-text-stroke:0.15px #242424;transform:translate(0.70px,0.87px) scaleX(0.868) rotate(.03deg);">Classroom Training</span>
<span class="t" style="left:711px;top:401px;font-size:8.7px;line-height:14px;color:#242424;-webkit-text-stroke:0.15px #242424;transform:translate(0.00px,0.87px) scaleX(0.921) rotate(.03deg);">Intermediate</span>
<span class="t" style="left:832px;top:401px;font-size:8.7px;line-height:14px;color:#242424;-webkit-text-stroke:0.15px #242424;transform:translate(0.00px,0.87px) scaleX(0.847) rotate(.03deg);">Test</span>
<span class="t" style="left:1074px;top:401px;font-size:8.7px;line-height:14px;color:#242424;-webkit-text-stroke:0.15px #242424;transform:translate(0.00px,0.87px) scaleX(0.929) rotate(.03deg);">2</span>
<span class="t" style="left:1144px;top:401px;font-size:8.7px;line-height:14px;color:#242424;-webkit-text-stroke:0.15px #242424;transform:translate(0.80px,0.87px) scaleX(0.931) rotate(.03deg);">2023</span>
<span class="t" style="left:1215px;top:401px;font-size:8.7px;line-height:14px;color:#242424;-webkit-text-stroke:0.15px #242424;transform:translate(0.50px,0.87px) scaleX(0.879) rotate(.03deg);">Test - Cloud Customer</span>
<span class="t" style="left:237px;top:421px;font-size:8.7px;line-height:14px;color:#242424;-webkit-text-stroke:0.15px #242424;transform:translate(0.30px,0.62px) scaleX(0.924) rotate(.03deg);">C310123574</span>
<span class="t" style="left:358px;top:421px;font-size:8.7px;line-height:14px;color:#2567d8;-webkit-text-stroke:0.1px #2567d8;transform:translate(0.30px,0.62px) scaleX(0.813) rotate(.03deg);">CL_CL</span>
<span class="t" style="left:559px;top:421px;font-size:8.7px;line-height:14px;color:#242424;-webkit-text-stroke:0.15px #242424;transform:translate(0.70px,0.62px) scaleX(0.868) rotate(.03deg);">Classroom Training</span>
<span class="t" style="left:711px;top:421px;font-size:8.7px;line-height:14px;color:#242424;-webkit-text-stroke:0.15px #242424;transform:translate(0.00px,0.62px) scaleX(0.921) rotate(.03deg);">Intermediate</span>
<span class="t" style="left:832px;top:421px;font-size:8.7px;line-height:14px;color:#242424;-webkit-text-stroke:0.15px #242424;transform:translate(0.00px,0.62px) scaleX(0.922) rotate(.03deg);">Induction</span>
<span class="t" style="left:1074px;top:421px;font-size:8.7px;line-height:14px;color:#242424;-webkit-text-stroke:0.15px #242424;transform:translate(0.00px,0.62px) scaleX(0.723) rotate(.03deg);">1</span>
<span class="t" style="left:1144px;top:421px;font-size:8.7px;line-height:14px;color:#242424;-webkit-text-stroke:0.15px #242424;transform:translate(0.80px,0.62px) scaleX(0.931) rotate(.03deg);">2023</span>
<span class="t" style="left:1215px;top:421px;font-size:8.7px;line-height:14px;color:#242424;-webkit-text-stroke:0.15px #242424;transform:translate(0.50px,0.62px) scaleX(0.879) rotate(.03deg);">Test - Cloud Customer</span>
<span class="t" style="left:237px;top:441px;font-size:8.7px;line-height:14px;color:#242424;-webkit-text-stroke:0.15px #242424;transform:translate(0.30px,0.37px) scaleX(0.924) rotate(.03deg);">C310123573</span>
<span class="t" style="left:358px;top:441px;font-size:8.7px;line-height:14px;color:#2567d8;-webkit-text-stroke:0.1px #2567d8;transform:translate(0.30px,0.37px) scaleX(0.831) rotate(.03deg);">Test_CL</span>
<span class="t" style="left:559px;top:441px;font-size:8.7px;line-height:14px;color:#242424;-webkit-text-stroke:0.15px #242424;transform:translate(0.70px,0.37px) scaleX(0.868) rotate(.03deg);">Classroom Training</span>
<span class="t" style="left:711px;top:441px;font-size:8.7px;line-height:14px;color:#242424;-webkit-text-stroke:0.15px #242424;transform:translate(0.00px,0.37px) scaleX(0.891) rotate(.03deg);">Beginner</span>
<span class="t" style="left:832px;top:441px;font-size:8.7px;line-height:14px;color:#242424;-webkit-text-stroke:0.15px #242424;transform:translate(0.00px,0.37px) scaleX(0.922) rotate(.03deg);">Induction</span>
<span class="t" style="left:1074px;top:441px;font-size:8.7px;line-height:14px;color:#242424;-webkit-text-stroke:0.15px #242424;transform:translate(0.00px,0.37px) scaleX(0.723) rotate(.03deg);">1</span>
<span class="t" style="left:1144px;top:441px;font-size:8.7px;line-height:14px;color:#242424;-webkit-text-stroke:0.15px #242424;transform:translate(0.80px,0.37px) scaleX(0.931) rotate(.03deg);">2023</span>
<span class="t" style="left:1215px;top:441px;font-size:8.7px;line-height:14px;color:#242424;-webkit-text-stroke:0.15px #242424;transform:translate(0.50px,0.37px) scaleX(0.879) rotate(.03deg);">Test - Cloud Customer</span>
<span class="t" style="left:237px;top:461px;font-size:8.7px;line-height:14px;color:#242424;-webkit-text-stroke:0.15px #242424;transform:translate(0.30px,0.12px) scaleX(0.915) rotate(.03deg);">O310123572</span>
<span class="t" style="left:358px;top:461px;font-size:8.7px;line-height:14px;color:#2567d8;-webkit-text-stroke:0.1px #2567d8;transform:translate(0.30px,0.12px) scaleX(0.841) rotate(.03deg);">Test_Mass Email_OL</span>
<span class="t" style="left:559px;top:461px;font-size:8.7px;line-height:14px;color:#242424;-webkit-text-stroke:0.15px #242424;transform:translate(0.70px,0.12px) scaleX(0.890) rotate(.03deg);">Online Training</span>
<span class="t" style="left:711px;top:461px;font-size:8.7px;line-height:14px;color:#242424;-webkit-text-stroke:0.15px #242424;transform:translate(0.00px,0.12px) scaleX(0.891) rotate(.03deg);">Beginner</span>
<span class="t" style="left:832px;top:461px;font-size:8.7px;line-height:14px;color:#242424;-webkit-text-stroke:0.15px #242424;transform:translate(0.00px,0.12px) scaleX(0.922) rotate(.03deg);">Induction</span>
<span class="t" style="left:1074px;top:461px;font-size:8.7px;line-height:14px;color:#242424;-webkit-text-stroke:0.15px #242424;transform:translate(0.00px,0.12px) scaleX(0.723) rotate(.03deg);">1</span>
<span class="t" style="left:1144px;top:461px;font-size:8.7px;line-height:14px;color:#242424;-webkit-text-stroke:0.15px #242424;transform:translate(0.80px,0.12px) scaleX(0.931) rotate(.03deg);">2023</span>
<span class="t" style="left:1215px;top:461px;font-size:8.7px;line-height:14px;color:#242424;-webkit-text-stroke:0.15px #242424;transform:translate(0.50px,0.12px) scaleX(0.879) rotate(.03deg);">Test - Cloud Customer</span>
<span class="t" style="left:237px;top:480px;font-size:8.7px;line-height:14px;color:#242424;-webkit-text-stroke:0.15px #242424;transform:translate(0.30px,0.87px) scaleX(0.924) rotate(.03deg);">C310123571</span>
<span class="t" style="left:358px;top:480px;font-size:8.7px;line-height:14px;color:#2567d8;-webkit-text-stroke:0.1px #2567d8;transform:translate(0.30px,0.87px) scaleX(0.833) rotate(.03deg);">Test_Mass Email_CL</span>
<span class="t" style="left:559px;top:480px;font-size:8.7px;line-height:14px;color:#242424;-webkit-text-stroke:0.15px #242424;transform:translate(0.70px,0.87px) scaleX(0.868) rotate(.03deg);">Classroom Training</span>
<span class="t" style="left:711px;top:480px;font-size:8.7px;line-height:14px;color:#242424;-webkit-text-stroke:0.15px #242424;transform:translate(0.00px,0.87px) scaleX(0.921) rotate(.03deg);">Intermediate</span>
<span class="t" style="left:832px;top:480px;font-size:8.7px;line-height:14px;color:#242424;-webkit-text-stroke:0.15px #242424;transform:translate(0.00px,0.87px) scaleX(0.856) rotate(.03deg);">Ice Age 2</span>
<span class="t" style="left:1074px;top:480px;font-size:8.7px;line-height:14px;color:#242424;-webkit-text-stroke:0.15px #242424;transform:translate(0.00px,0.87px) scaleX(0.723) rotate(.03deg);">1</span>
<span class="t" style="left:1144px;top:480px;font-size:8.7px;line-height:14px;color:#242424;-webkit-text-stroke:0.15px #242424;transform:translate(0.80px,0.87px) scaleX(0.931) rotate(.03deg);">2023</span>
<span class="t" style="left:1215px;top:480px;font-size:8.7px;line-height:14px;color:#242424;-webkit-text-stroke:0.15px #242424;transform:translate(0.50px,0.87px) scaleX(0.879) rotate(.03deg);">Test - Cloud Customer</span>
<span class="t" style="left:237px;top:500px;font-size:8.7px;line-height:14px;color:#242424;-webkit-text-stroke:0.15px #242424;transform:translate(0.30px,0.62px) scaleX(0.915) rotate(.03deg);">O300123569</span>
<span class="t" style="left:358px;top:500px;font-size:8.7px;line-height:14px;color:#2567d8;-webkit-text-stroke:0.1px #2567d8;transform:translate(0.30px,0.62px) scaleX(0.907) rotate(.03deg);">Test3001</span>
<span class="t" style="left:559px;top:500px;font-size:8.7px;line-height:14px;color:#242424;-webkit-text-stroke:0.15px #242424;transform:translate(0.70px,0.62px) scaleX(0.890) rotate(.03deg);">Online Training</span>
<span class="t" style="left:711px;top:500px;font-size:8.7px;line-height:14px;color:#242424;-webkit-text-stroke:0.15px #242424;transform:translate(0.00px,0.62px) scaleX(0.921) rotate(.03deg);">Intermediate</span>
<span class="t" style="left:832px;top:500px;font-size:8.7px;line-height:14px;color:#242424;-webkit-text-stroke:0.15px #242424;transform:translate(0.00px,0.62px) scaleX(0.854) rotate(.03deg);">B-LEAD 2</span>
<span class="t" style="left:1074px;top:500px;font-size:8.7px;line-height:14px;color:#242424;-webkit-text-stroke:0.15px #242424;transform:translate(0.00px,0.62px) scaleX(0.723) rotate(.03deg);">1</span>
<span class="t" style="left:1144px;top:500px;font-size:8.7px;line-height:14px;color:#242424;-webkit-text-stroke:0.15px #242424;transform:translate(0.80px,0.62px) scaleX(0.931) rotate(.03deg);">2023</span>
<span class="t" style="left:1215px;top:500px;font-size:8.7px;line-height:14px;color:#242424;-webkit-text-stroke:0.15px #242424;transform:translate(0.50px,0.62px) scaleX(0.879) rotate(.03deg);">Test - Cloud Customer</span>
<span class="t" style="left:237px;top:520px;font-size:8.7px;line-height:14px;color:#242424;-webkit-text-stroke:0.15px #242424;transform:translate(0.30px,0.37px) scaleX(0.915) rotate(.03deg);">O300123568</span>
<span class="t" style="left:358px;top:520px;font-size:8.7px;line-height:14px;color:#2567d8;-webkit-text-stroke:0.1px #2567d8;transform:translate(0.30px,0.37px) scaleX(0.918) rotate(.03deg);">Test30</span>
<span class="t" style="left:559px;top:520px;font-size:8.7px;line-height:14px;color:#242424;-webkit-text-stroke:0.15px #242424;transform:translate(0.70px,0.37px) scaleX(0.890) rotate(.03deg);">Online Training</span>
<span class="t" style="left:711px;top:520px;font-size:8.7px;line-height:14px;color:#242424;-webkit-text-stroke:0.15px #242424;transform:translate(0.00px,0.37px) scaleX(0.921) rotate(.03deg);">Intermediate</span>
<span class="t" style="left:832px;top:520px;font-size:8.7px;line-height:14px;color:#242424;-webkit-text-stroke:0.15px #242424;transform:translate(0.00px,0.37px) scaleX(0.866) rotate(.03deg);">BUDDY OJT</span>
<span class="t" style="left:1074px;top:520px;font-size:8.7px;line-height:14px;color:#242424;-webkit-text-stroke:0.15px #242424;transform:translate(0.00px,0.37px) scaleX(0.723) rotate(.03deg);">1</span>
<span class="t" style="left:1144px;top:520px;font-size:8.7px;line-height:14px;color:#242424;-webkit-text-stroke:0.15px #242424;transform:translate(0.80px,0.37px) scaleX(0.931) rotate(.03deg);">2023</span>
<span class="t" style="left:1215px;top:520px;font-size:8.7px;line-height:14px;color:#242424;-webkit-text-stroke:0.15px #242424;transform:translate(0.50px,0.37px) scaleX(0.879) rotate(.03deg);">Test - Cloud Customer</span>
<span class="t" style="left:248px;top:549px;font-size:9.5px;line-height:16px;color:#6f92cf;transform:translate(0.00px,0.10px) scaleX(0.831) rotate(.03deg);">«</span>
<span class="t" style="left:268px;top:549px;font-size:9.5px;line-height:16px;color:#6f92cf;transform:translate(0.50px,0.10px) scaleX(0.820) rotate(.03deg);">‹</span>
<span class="t" style="left:288px;top:547px;font-size:10.5px;line-height:18px;color:#fff;font-weight:700;transform:translate(0.00px,0.00px) scaleX(0.856) rotate(.03deg);">1</span>
<span class="t" style="left:309px;top:547px;font-size:10.5px;line-height:18px;color:#3f74c2;transform:translate(0.50px,0.00px) scaleX(0.941) rotate(.03deg);">2</span>
<span class="t" style="left:331px;top:547px;font-size:10.5px;line-height:18px;color:#3f74c2;transform:translate(0.50px,0.00px) scaleX(0.941) rotate(.03deg);">3</span>
<span class="t" style="left:353px;top:548px;font-size:9.5px;line-height:16px;color:#6a8fd0;font-weight:700;transform:translate(0.00px,0.60px) scaleX(0.884) rotate(.03deg);">...</span>
<span class="t" style="left:376px;top:549px;font-size:9.5px;line-height:16px;color:#6f92cf;transform:translate(0.50px,0.10px) scaleX(0.820) rotate(.03deg);">›</span>
<span class="t" style="left:395px;top:549px;font-size:9.5px;line-height:16px;color:#6f92cf;transform:translate(0.00px,0.10px) scaleX(0.831) rotate(.03deg);">»</span>
<span class="t" style="left:418px;top:546px;font-size:10.8px;line-height:18px;color:#333;transform:translate(0.60px,0.27px) scaleX(0.743) rotate(.03deg);">Page Size:</span>
<span class="t" style="left:474px;top:547px;font-size:10.8px;line-height:18px;color:#333;transform:translate(0.00px,0.57px) scaleX(0.874) rotate(.03deg);">10</span>
<span class="t" style="left:518px;top:547px;font-size:10.8px;line-height:18px;color:#333;transform:translate(0.40px,0.07px) scaleX(0.780) rotate(.03deg);">Page: 1 of 4</span>
<span class="t" style="left:1259px;top:546px;font-size:10.8px;line-height:18px;color:#333;transform:translate(0.80px,0.87px) scaleX(0.822) rotate(.03deg);">Total Records: 33</span>
</body>
</html>
